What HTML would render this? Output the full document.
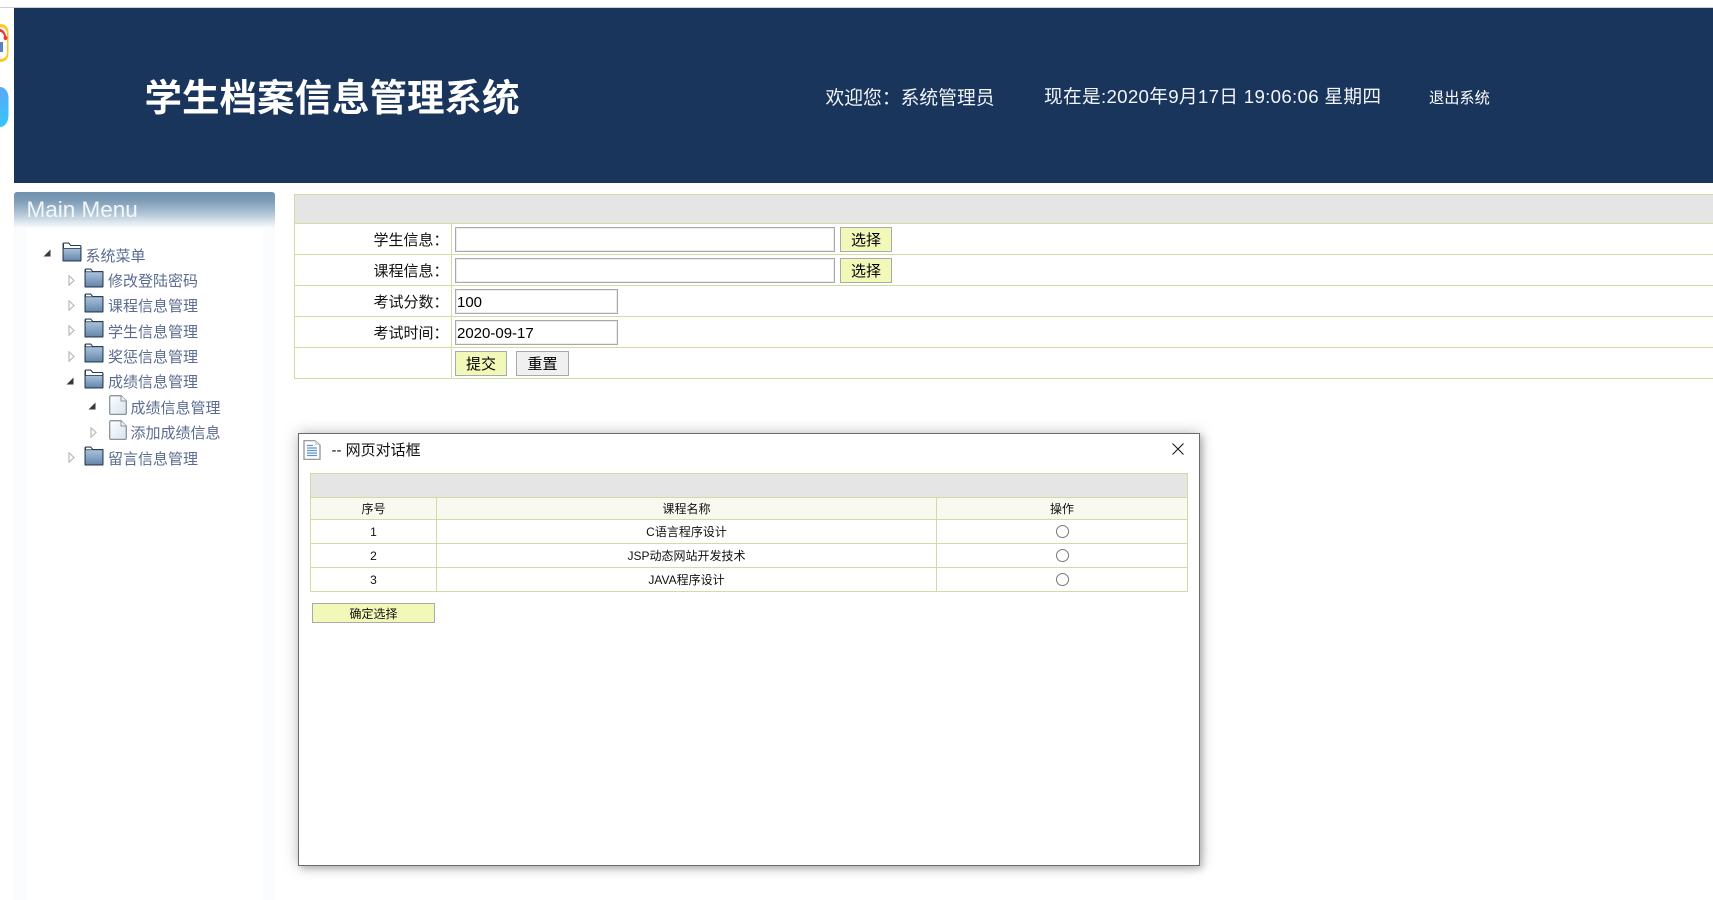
<!DOCTYPE html>
<html lang="zh-CN">
<head>
<meta charset="utf-8">
<title>学生档案信息管理系统</title>
<style>
html,body{margin:0;padding:0;background:#fff;width:1713px;height:900px;overflow:hidden;}
body{position:relative;font-family:"Liberation Sans","Noto Sans CJK SC",sans-serif;color:#000;}
.a{position:absolute;white-space:nowrap;}
.t{position:absolute;white-space:nowrap;font-size:15px;line-height:24px;height:24px;color:#5a6b8f;margin-top:1.5px;}
.l{position:absolute;background:#d1dca3;}
.lab{position:absolute;left:295px;width:153.5px;text-align:right;font-size:15px;line-height:30px;height:30px;white-space:nowrap;margin-top:1.5px;color:#111;}
.inp{position:absolute;box-sizing:border-box;left:455px;height:25px;border:1px solid #a9a9a9;box-shadow:inset 0 0 0 1px #ececec;background:#fff;font-size:15px;line-height:25px;padding-left:1px;white-space:nowrap;}
.btn{position:absolute;box-sizing:border-box;height:25px;width:52px;border:1px solid #aaa;background:#f2f8b8;font-size:15px;line-height:25px;text-align:center;white-space:nowrap;}
.c{position:absolute;text-align:center;font-size:12px;line-height:22px;height:22px;white-space:nowrap;color:#111;}
.c.d{margin-top:1px;}
.r{position:absolute;box-sizing:border-box;width:13px;height:13px;border:1px solid #767676;border-radius:50%;background:#fff;left:1056px;}
svg{position:absolute;display:block;}
</style>
</head>
<body>
<!-- top line -->
<div class="a" style="left:0;top:7px;width:1713px;height:1px;background:#cfcfcf;"></div>
<!-- left cut-off desktop icons -->
<svg style="left:0;top:22px;" width="9" height="42" viewBox="0 0 9 42">
  <path d="M0 2 C5 2 8.5 5 8.5 10 V31 C8.5 37 5 40 0 40 Z" fill="#ffc61a"/>
  <path d="M0 5 C4 5 7 8 7 12 V30 C7 35 4 37 0 37 Z" fill="#fff"/>
  <path d="M0 7 C3 7 6 11 6.5 16 L4.5 16 C4 12 2 10 0 10 Z" fill="#f0323c"/>
  <circle cx="5.5" cy="16" r="2" fill="#f0323c"/>
  <rect x="0" y="20" width="3" height="10" fill="#5b7fc0"/>
</svg>
<svg style="left:0;top:86px;" width="9" height="42" viewBox="0 0 9 42">
  <defs><linearGradient id="bb" x1="0" y1="0" x2="0" y2="1"><stop offset="0" stop-color="#5aa8f6"/><stop offset="1" stop-color="#35c6fb"/></linearGradient></defs>
  <path d="M0 1 C5 1 8.5 6 8.5 12 V29 C8.5 36 5 41 0 41 Z" fill="url(#bb)"/>
</svg>
<!-- header -->
<div class="a" style="left:14px;top:8px;width:1699px;height:175px;background:#1a355c;"></div>
<div class="a" style="left:144.5px;top:74px;font-size:37.5px;line-height:48px;font-weight:700;color:#fff;">学生档案信息管理系统</div>
<div class="a" style="left:825.5px;top:84.5px;font-size:18.8px;line-height:26px;color:#f2f5f9;">欢迎您：系统管理员</div>
<div class="a" style="left:1044px;top:84px;font-size:18.7px;line-height:26px;color:#f2f5f9;letter-spacing:0.3px;">现在是:2020年9月17日 19:06:06 星期四</div>
<div class="a" style="left:1429px;top:86.5px;font-size:15.2px;line-height:24px;color:#fff;">退出系统</div>

<!-- sidebar -->
<div class="a" style="left:14px;top:192px;width:261px;height:708px;background:#fbfcfe;"></div>
<div class="a" style="left:14px;top:192px;width:261px;height:36px;background:linear-gradient(#6f91ad 0,#7f9db7 25%,#a8bfd1 55%,#dfe8ef 85%,#fbfcfe 100%);border-radius:3px 3px 0 0;"></div>
<div class="a" style="left:26px;top:228px;width:237px;height:672px;background:#fff;"></div>
<div class="a" style="left:26.5px;top:196px;font-size:22.5px;line-height:28px;color:#f3f7fa;">Main Menu</div>

<svg width="0" height="0" style="position:absolute"><defs>
  <linearGradient id="fg" x1="0" y1="0" x2="0" y2="1"><stop offset="0" stop-color="#a9c2dc"/><stop offset="1" stop-color="#6587ab"/></linearGradient>
  <linearGradient id="pg" x1="0" y1="0" x2="1" y2="1"><stop offset="0" stop-color="#fff"/><stop offset="1" stop-color="#d6e2ef"/></linearGradient>
  <symbol id="folder" viewBox="0 0 20 20">
    <path d="M1 19.5 C.5 19.5 .5 19 .5 18.5 V2 C.5 1 1 .5 2 .5 H7 L9 3 H19 C19.5 3 19.5 3.5 19.5 4 V18.5 C19.5 19.2 19 19.5 18.5 19.5 Z" fill="#2a3c50"/>
    <path d="M2 1.6 H6.5 L8 3.4 H2 Z" fill="#fff"/>
    <rect x="1.6" y="4.2" width="16.8" height="14.2" fill="url(#fg)"/>
  </symbol>
  <symbol id="folderopen" viewBox="0 0 20 20">
    <path d="M1 19.5 C.5 19.5 .5 19 .5 18.5 V2 C.5 1 1 .5 2 .5 H7 L9 3 H18 C19 3 19.5 3.5 19.5 4.5 V18.5 C19.5 19.2 19 19.5 18.5 19.5 Z" fill="#2a3c50"/>
    <path d="M2 1.6 H6.5 L8.4 4 H18.3 V6 H2 Z" fill="#fff"/>
    <rect x="1.6" y="6.8" width="16.8" height="11.6" fill="url(#fg)"/>
  </symbol>
  <symbol id="file" viewBox="0 0 18 20">
    <path d="M2 .7 H12 L17.3 6 V18 C17.3 18.9 16.8 19.4 16 19.4 H2 C1.2 19.4 .7 18.9 .7 18 V2 C.7 1.2 1.2 .7 2 .7 Z" fill="url(#pg)" stroke="#8b949c" stroke-width="1.3"/>
    <path d="M12 .7 V6 H17.3" fill="#eef3f8" stroke="#8b949c" stroke-width="1"/>
  </symbol>
  <symbol id="op" viewBox="0 0 8 8"><path d="M7.5 .5 V7.5 H.5 Z" fill="#3a3a3a"/></symbol>
  <symbol id="cl" viewBox="0 0 7 11"><path d="M1 .8 L6 5.5 L1 10.2 Z" fill="#fff" stroke="#b9b9b9" stroke-width="1.2"/></symbol>
</defs></svg>

<svg style="left:43px;top:249px" width="8" height="8"><use href="#op"/></svg>
<svg style="left:62px;top:242px" width="20" height="20"><use href="#folderopen"/></svg>
<div class="t" style="left:85.5px;top:243px">系统菜单</div>

<svg style="left:68px;top:275px" width="7" height="11"><use href="#cl"/></svg>
<svg style="left:84px;top:268px" width="20" height="20"><use href="#folder"/></svg>
<div class="t" style="left:108px;top:268px">修改登陆密码</div>

<svg style="left:68px;top:300px" width="7" height="11"><use href="#cl"/></svg>
<svg style="left:84px;top:293px" width="20" height="20"><use href="#folder"/></svg>
<div class="t" style="left:108px;top:293px">课程信息管理</div>

<svg style="left:68px;top:325px" width="7" height="11"><use href="#cl"/></svg>
<svg style="left:84px;top:318px" width="20" height="20"><use href="#folder"/></svg>
<div class="t" style="left:108px;top:319px">学生信息管理</div>

<svg style="left:68px;top:351px" width="7" height="11"><use href="#cl"/></svg>
<svg style="left:84px;top:343px" width="20" height="20"><use href="#folder"/></svg>
<div class="t" style="left:108px;top:344.5px">奖惩信息管理</div>

<svg style="left:66px;top:377px" width="8" height="8"><use href="#op"/></svg>
<svg style="left:84px;top:369px" width="20" height="20"><use href="#folderopen"/></svg>
<div class="t" style="left:108px;top:369px">成绩信息管理</div>

<svg style="left:88px;top:402px" width="8" height="8"><use href="#op"/></svg>
<svg style="left:109px;top:395px" width="18" height="20"><use href="#file"/></svg>
<div class="t" style="left:130.5px;top:395px">成绩信息管理</div>

<svg style="left:90px;top:427px" width="7" height="11"><use href="#cl"/></svg>
<svg style="left:109px;top:420px" width="18" height="20"><use href="#file"/></svg>
<div class="t" style="left:130.5px;top:420px">添加成绩信息</div>

<svg style="left:68px;top:452px" width="7" height="11"><use href="#cl"/></svg>
<svg style="left:84px;top:446px" width="20" height="20"><use href="#folder"/></svg>
<div class="t" style="left:108px;top:446px">留言信息管理</div>

<!-- main form table -->
<div class="a" style="left:295px;top:195px;width:1418px;height:28px;background:#e5e5e5;"></div>
<div class="l" style="left:294px;top:194px;width:1419px;height:1px;"></div>
<div class="l" style="left:294px;top:223px;width:1419px;height:1px;"></div>
<div class="l" style="left:294px;top:254px;width:1419px;height:1px;"></div>
<div class="l" style="left:294px;top:285px;width:1419px;height:1px;"></div>
<div class="l" style="left:294px;top:316px;width:1419px;height:1px;"></div>
<div class="l" style="left:294px;top:347px;width:1419px;height:1px;"></div>
<div class="l" style="left:294px;top:378px;width:1419px;height:1px;"></div>
<div class="l" style="left:294px;top:194px;width:1px;height:185px;"></div>
<div class="l" style="left:451px;top:224px;width:1px;height:154px;"></div>

<div class="lab" style="top:224px">学生信息：</div>
<div class="lab" style="top:255px">课程信息：</div>
<div class="lab" style="top:286px">考试分数：</div>
<div class="lab" style="top:317px">考试时间：</div>

<div class="inp" style="top:227px;width:380px"></div>
<div class="btn" style="left:840px;top:227px">选择</div>
<div class="inp" style="top:258px;width:380px"></div>
<div class="btn" style="left:840px;top:258px">选择</div>
<div class="inp" style="top:289px;width:163px">100</div>
<div class="inp" style="top:320px;width:163px">2020-09-17</div>
<div class="btn" style="left:455px;top:351px;width:52px">提交</div>
<div class="btn" style="left:516px;top:351px;width:53px;background:#f0f0f0">重置</div>

<!-- dialog -->
<div class="a" style="box-sizing:border-box;left:298px;top:433px;width:902px;height:433px;background:#fff;border:1px solid #6b6b6b;box-shadow:0 0 14px rgba(0,0,0,.25),3px 3px 6px rgba(0,0,0,.18);"></div>
<svg style="left:303px;top:440px" width="18" height="20" viewBox="0 0 18 20">
  <path d="M1 .7 H12 L17 5 V19.3 H1 Z" fill="#fff" stroke="#8c8c8c" stroke-width="1.2"/>
  <path d="M12 .7 V5 H17 Z" fill="#d8d8d8"/>
  <path d="M4 5.5 H10 M4 8 H14 M4 10.5 H14 M4 13 H14 M4 15.5 H14" stroke="#5b93cc" stroke-width="1.3"/>
</svg>
<div class="a" style="left:331.5px;top:438.5px;font-size:15px;line-height:24px;color:#111;">-- 网页对话框</div>
<svg style="left:1172px;top:443px" width="12" height="12" viewBox="0 0 12 12"><path d="M.5 .5 L11.5 11.5 M11.5 .5 L.5 11.5" stroke="#111" stroke-width="1" fill="none"/></svg>

<div class="a" style="left:311px;top:474px;width:876px;height:23px;background:#e5e5e5;"></div>
<div class="a" style="left:311px;top:498px;width:876px;height:21px;background:#f9f9f0;"></div>
<div class="l" style="left:310px;top:473px;width:878px;height:1px;"></div>
<div class="l" style="left:310px;top:497px;width:878px;height:1px;"></div>
<div class="l" style="left:310px;top:519px;width:878px;height:1px;"></div>
<div class="l" style="left:310px;top:543px;width:878px;height:1px;"></div>
<div class="l" style="left:310px;top:567px;width:878px;height:1px;"></div>
<div class="l" style="left:310px;top:591px;width:878px;height:1px;"></div>
<div class="l" style="left:310px;top:473px;width:1px;height:119px;"></div>
<div class="l" style="left:1187px;top:473px;width:1px;height:119px;"></div>
<div class="l" style="left:436px;top:497px;width:1px;height:95px;"></div>
<div class="l" style="left:936px;top:497px;width:1px;height:95px;"></div>

<div class="c" style="left:311px;width:125px;top:498px">序号</div>
<div class="c" style="left:437px;width:499px;top:498px">课程名称</div>
<div class="c" style="left:937px;width:250px;top:498px">操作</div>
<div class="c d" style="left:311px;width:125px;top:520px">1</div>
<div class="c d" style="left:437px;width:499px;top:520px">C语言程序设计</div>
<div class="c d" style="left:311px;width:125px;top:544px">2</div>
<div class="c d" style="left:437px;width:499px;top:544px">JSP动态网站开发技术</div>
<div class="c d" style="left:311px;width:125px;top:568px">3</div>
<div class="c d" style="left:437px;width:499px;top:568px">JAVA程序设计</div>
<div class="r" style="top:525px"></div>
<div class="r" style="top:549px"></div>
<div class="r" style="top:573px"></div>

<div class="a" style="box-sizing:border-box;left:312px;top:603px;width:123px;height:20px;background:#f2f8b8;border:1px solid #aaa;font-size:12px;line-height:20px;text-align:center;color:#111;">确定选择</div>
</body>
</html>
